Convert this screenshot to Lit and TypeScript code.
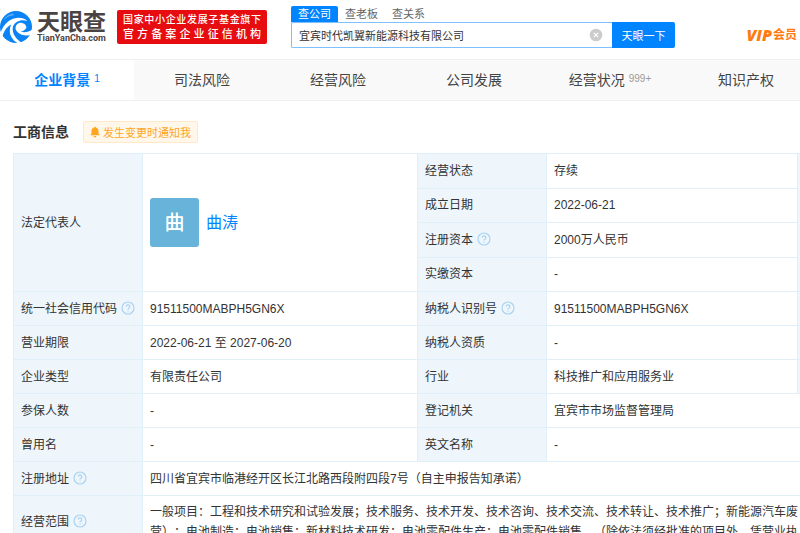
import { LitElement, html, css, svg, nothing } from "lit";
import { customElement } from "lit/decorators.js";

const helpIcon = html`<svg class="help" viewBox="0 0 14 14" role="img" aria-label="说明">
  <circle cx="7" cy="7" r="6" fill="none" stroke="#a9d3f0" stroke-width="1.2" />
  <path d="M5.2 5.6a1.8 1.8 0 1 1 2.6 1.6c-.6.3-.8.6-.8 1.2" fill="none" stroke="#a9d3f0" stroke-width="1.2" />
  <circle cx="7" cy="10.1" r=".7" fill="#a9d3f0" />
</svg>`;

const swirl = svg`
  <circle cx="16" cy="17" r="16" fill="#0a84f5" />
  <path d="M0 25C2 17 7 10.500 14 8.500c5-1.400 10-.5 13.500 2.500-4-1.300-7.500-1-10.500.8-3.500 2-4.800 5.200-4.200 9 .8 5 4.400 9.500 10.200 12.700l-3 .7c-5.500-2.200-9-6.200-10-11-.5-3 0-6 1.200-8.600C6.500 17.300 3.800 21 2 28z" fill="#fff" />
  <path d="M15.500 17.500c.5-3.200 3.200-5 6.300-4.600 2.600.3 4.200 1.900 4.700 4.300-1 2.600-3.300 4.200-6.200 4.300 3.800 1.600 8.300.8 12.700-2.500v5.200c-5.500 2.300-11.500 1.600-15-1.700-1.800-1.500-2.700-3.200-2.500-5z" fill="#fff" />
  <path d="M13 3.500c-4 .5-7.500 3-10 7 3-3.200 6.500-5 11-5.300z" fill="#fff" opacity=".35" />`;

interface Field {
  label: string;
  value: string;
  help?: boolean;
}

const statusFields: Field[] = [
  { label: "经营状态", value: "存续" },
  { label: "成立日期", value: "2022-06-21" },
  { label: "注册资本", value: "2000万人民币", help: true },
  { label: "实缴资本", value: "-" },
];

const pairs: [Field, Field][] = [
  [
    { label: "统一社会信用代码", value: "91511500MABPH5GN6X", help: true },
    { label: "纳税人识别号", value: "91511500MABPH5GN6X", help: true },
  ],
  [
    { label: "营业期限", value: "2022-06-21 至 2027-06-20" },
    { label: "纳税人资质", value: "-" },
  ],
  [
    { label: "企业类型", value: "有限责任公司" },
    { label: "行业", value: "科技推广和应用服务业" },
  ],
  [
    { label: "参保人数", value: "-" },
    { label: "登记机关", value: "宜宾市市场监督管理局" },
  ],
  [
    { label: "曾用名", value: "-" },
    { label: "英文名称", value: "-" },
  ],
];

const label = (f: Field) => html`<th scope="row">${f.label}${f.help ? helpIcon : nothing}</th>`;

@customElement("site-header")
class SiteHeader extends LitElement {
  static styles = css`
    :host { display: block; background: #fff; }
    .bar { display: flex; align-items: flex-start; height: 60px; border-bottom: 1px solid #eee; box-sizing: border-box; }
    .logo { display: flex; gap: 4px; margin-top: 10px; width: 117px; color: #4b4343; text-decoration: none; flex: none; }
    .mark { width: 33px; height: 34px; flex: none; }
    .name { display: flex; flex-direction: column; }
    .cn { font-size: 23px; line-height: 24px; font-weight: 700; }
    .en { font: 700 9px/9px Roboto, sans-serif; }
    .banner { flex: none; box-sizing: border-box; width: 150px; height: 34px; margin-top: 10px; padding: 2px 6px; border-radius: 2px; background: #e60c10; color: #fff; }
    .banner span { display: block; font-size: 10px; line-height: 15px; font-weight: 500; text-align-last: justify; }
    .banner span + span { font-size: 11px; }
    .search { flex: none; margin: 6px 0 0 24px; width: 384px; }
    .tabs { display: flex; }
    .tab { border: 0; background: none; font: inherit; font-size: 11px; line-height: 16px; height: 16px; padding: 0 7px; color: #666; }
    .tab.on { background: #0084ff; color: #fff; border-radius: 2px 2px 0 0; }
    .box { display: flex; height: 26px; }
    .field { display: flex; flex: 1; align-items: center; border: 1px solid #7fc1ff; border-right: 0; padding: 0 9px 0 7px; border-radius: 2px 0 0 2px; }
    .field input { flex: 1; min-width: 0; border: 0; padding: 0; outline: 0; font: inherit; font-size: 11px; color: #333; }
    .clear { border: 0; padding: 0; background: none; width: 14px; height: 14px; display: flex; }
    .go { border: 0; width: 63px; background: #0084ff; color: #fff; font: inherit; font-size: 11px; padding: 0; border-radius: 0 2px 2px 0; }
    .vip { margin: 26px 3px 0 auto; color: #ff7a0f; font-size: 12px; line-height: 18px; font-weight: 700; text-decoration: none; white-space: nowrap; display: flex; gap: 1px; }
    .vip em { font: italic 800 16px/18px "Open Sans", sans-serif; }
  `;
  render() {
    return html`<header class="bar">
      <a class="logo" href="#">
        <svg class="mark" viewBox="0 0 33 34" aria-hidden="true">${swirl}</svg>
        <span class="name"><span class="cn">天眼查</span><span class="en">TianYanCha.com</span></span>
      </a>
      <div class="banner"><span>国家中小企业发展子基金旗下</span><span>官方备案企业征信机构</span></div>
      <form class="search" @submit=${(e: Event) => e.preventDefault()}>
        <div class="tabs">
          <button type="button" class="tab on">查公司</button>
          <button type="button" class="tab">查老板</button>
          <button type="button" class="tab">查关系</button>
        </div>
        <div class="box">
          <div class="field">
            <input type="text" aria-label="搜索公司" .value=${"宜宾时代凯翼新能源科技有限公司"} />
            <button type="button" class="clear" aria-label="清除">
              <svg width="14" height="14" viewBox="0 0 14 14"><circle cx="7" cy="7" r="6.300" fill="#ccc" /><path d="M4.800 4.800l4.400 4.400M9.200 4.800L4.800 9.200" stroke="#fff" stroke-width="1.100" /></svg>
            </button>
          </div>
          <button class="go">天眼一下</button>
        </div>
      </form>
      <a class="vip" href="#"><em>VIP</em>会员</a>
    </header>`;
  }
}

@customElement("section-nav")
class SectionNav extends LitElement {
  static styles = css`
    :host { display: block; }
    nav { display: grid; grid-template-columns: 134px repeat(5, 17%); height: 41px; box-sizing: border-box; border-bottom: 1px solid #eee; background: #f9f9f9; }
    a { display: flex; align-items: center; justify-content: center; gap: 4px; padding-bottom: 3px; color: #444; font-size: 14px; text-decoration: none; white-space: nowrap; }
    a.on { background: #fff; color: #0084ff; font-weight: 700; }
    small { font: 10px "Liberation Sans", sans-serif; color: #999; }
    .on small { color: #0084ff; }
  `;
  render() {
    const items = [["企业背景", "1"], ["司法风险"], ["经营风险"], ["公司发展"], ["经营状况", "999+"], ["知识产权"]];
    return html`<nav>
      ${items.map(([t, n], i) => html`<a href="#" class=${i === 0 ? "on" : ""}>${t}${n ? html`<small>${n}</small>` : nothing}</a>`)}
    </nav>`;
  }
}

@customElement("company-table")
class CompanyTable extends LitElement {
  static styles = css`
    :host { display: block; overflow: hidden; }
    table { width: calc(100% + 118px); table-layout: fixed; border-collapse: collapse; font-size: 12px; line-height: 20px; color: #333; }
    .label { width: 129px; }
    .person { width: 275px; }
    .next { width: 120px; }
    th, td { height: 34px; box-sizing: border-box; padding: 0 7px; border: 1px solid #e1eff8; text-align: left; font-weight: 400; white-space: nowrap; }
    th { background: #eef6fc; }
    .tall { height: 138px; }
    .rep { display: flex; align-items: center; gap: 7px; }
    .avatar { width: 49px; height: 49px; border-radius: 3px; background: #67b3da; color: #fff; font-size: 20px; font-weight: 500; display: flex; align-items: center; justify-content: center; }
    .rep a { font-size: 16px; color: #0084ff; text-decoration: none; }
    .scope { padding: 6px 7px; text-spacing-trim: space-all; }
    .help { width: 14px; height: 14px; margin-left: 4px; vertical-align: -2px; }
  `;
  render() {
    const [first, ...rest] = statusFields;
    return html`<table>
      <colgroup><col class="label" /><col class="person" /><col class="label" /><col /><col class="next" /></colgroup>
      <tbody>
        <tr>
          <th scope="row" rowspan="4" class="tall">法定代表人</th>
          <td rowspan="4" class="tall"><div class="rep"><span class="avatar">曲</span><a href="#">曲涛</a></div></td>
          ${label(first)}
          <td>${first.value}</td>
          <th rowspan="4"></th>
        </tr>
        ${rest.map((f) => html`<tr>${label(f)}<td>${f.value}</td></tr>`)}
        ${pairs.map(([a, b], i) => html`<tr>
          ${label(a)}<td>${a.value}</td>
          ${label(b)}<td colspan=${i > 2 ? 2 : 1}>${b.value}</td>
          ${i > 2 ? nothing : html`<th></th>`}
        </tr>`)}
        <tr>${label({ label: "注册地址", value: "", help: true })}<td colspan="4">四川省宜宾市临港经开区长江北路西段附四段7号（自主申报告知承诺）</td></tr>
        <tr>
          ${label({ label: "经营范围", value: "", help: true })}
          <td colspan="4" class="scope">一般项目：工程和技术研究和试验发展；技术服务、技术开发、技术咨询、技术交流、技术转让、技术推广；新能源汽车废<br />营）；电池制造；电池销售；新材料技术研发；电池零配件生产；电池零配件销售。（除依法须经批准的项目外，凭营业执</td>
        </tr>
      </tbody>
    </table>`;
  }
}

@customElement("app-root")
class AppRoot extends LitElement {
  static styles = css`
    :host { display: block; height: 100vh; overflow: hidden; background: #fff; font-family: "Liberation Sans", "Noto Sans CJK SC", sans-serif; }
    .title { display: flex; align-items: center; gap: 14px; padding: 20px 0 10px 13px; }
    h2 { margin: 0; font-size: 14px; line-height: 20px; color: #333; }
    .notify { display: flex; align-items: center; gap: 3px; height: 22px; box-sizing: border-box; padding: 0 6px; border: 1px solid #ffe9c9; border-radius: 2px; background: #fff7ea; color: #ffa51f; font: inherit; font-size: 11px; }
    company-table { margin-left: 13px; }
  `;
  render() {
    return html`
      <site-header></site-header>
      <section-nav></section-nav>
      <main>
        <div class="title">
          <h2>工商信息</h2>
          <button class="notify">
            <svg width="10" height="12" viewBox="0 0 10 12" aria-hidden="true"><path d="M5 .8a.8.800 0 0 1 .8.800C7.600 2 8.500 3.400 8.500 5v2.600l1 1.200v.5H.5v-.5l1-1.200V5c0-1.600.9-3 2.700-3.400A.8.800 0 0 1 5 .8zM3.600 10h2.800a1.400 1.400 0 0 1-2.800 0z" fill="#ffa51f" /></svg>
            发生变更时通知我
          </button>
        </div>
        <company-table></company-table>
      </main>`;
  }
}
